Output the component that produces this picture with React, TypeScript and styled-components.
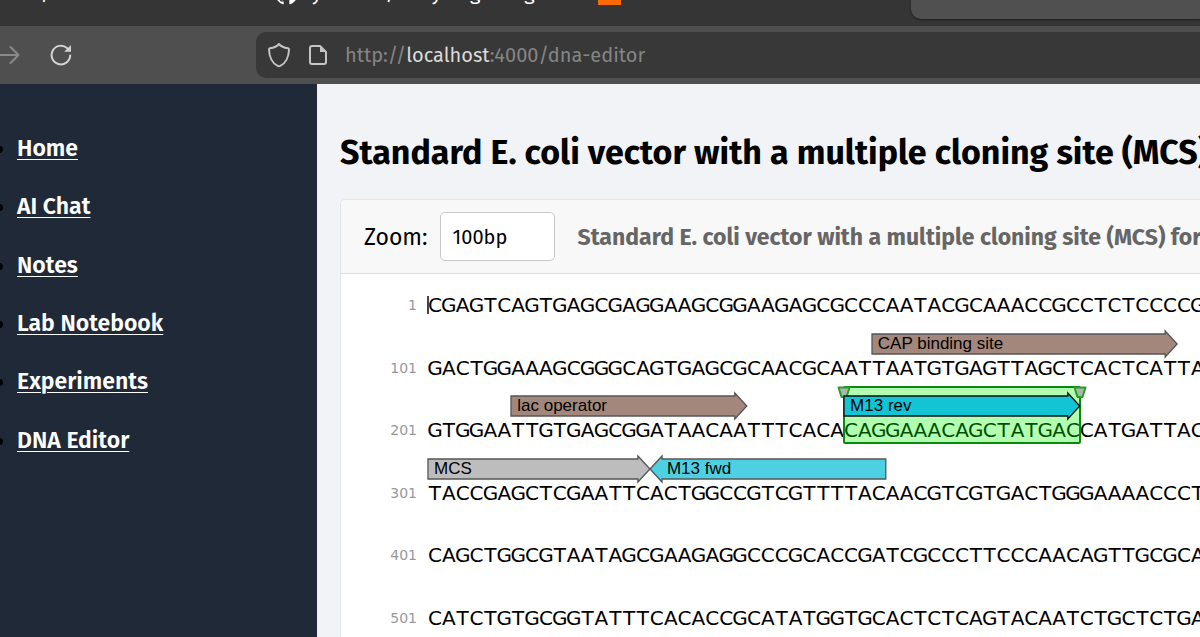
import React from "react";
import styled, { createGlobalStyle } from "styled-components";

const UI_FONT = '"Fira Sans", "Open Sans", "Noto Sans", sans-serif';
const SEQUENCE_FONT = '"DejaVu Sans", "Noto Sans", sans-serif';
const LABEL_FONT = '"Liberation Sans", Arial, sans-serif';

const BASES_PER_ROW = 100;
const ROW_WIDTH = 1387;
const BASE_WIDTH = ROW_WIDTH / BASES_PER_ROW;

const GlobalStyle = createGlobalStyle`
  *, *::before, *::after { box-sizing: border-box; }
  body { margin: 0; font-family: ${UI_FONT}; color: #000; overflow: hidden; }
`;

const Page = styled.div`
  display: flex;
  flex-direction: column;
  height: 100vh;
  overflow: hidden;
`;

/* Browser chrome */

const TabStrip = styled.div`
  display: flex;
  align-items: flex-start;
  flex: none;
  height: 26px;
  overflow: hidden;
  background: #353535;
`;

const Tab = styled.div<{ $width: number }>`
  display: flex;
  align-items: flex-end;
  flex: none;
  width: ${(p) => p.$width}px;
  gap: 3px;
  margin-top: -19px;
  height: 24px;
  color: #fff;
  font-size: 20px;
  line-height: 24px;
  white-space: nowrap;
`;

const OrangeMark = styled.span`
  width: 23px;
  height: 24px;
  background: #ff6a00;
`;

const ActiveTab = styled.div`
  flex: 1;
  height: 19px;
  border-radius: 0 0 0 10px;
  background: #505050;
  box-shadow: 0 1px 2px #1c1c1c;
`;

const Toolbar = styled.div`
  display: flex;
  align-items: center;
  flex: none;
  height: 58px;
  background: #4f4f4f;
`;

const ToolButton = styled.button<{ $width: number; $color: string }>`
  display: flex;
  justify-content: flex-end;
  flex: none;
  width: ${(p) => p.$width}px;
  padding: 0;
  border: 0;
  background: none;
  color: ${(p) => p.$color};
`;

const AddressBar = styled.div`
  display: flex;
  align-items: center;
  flex: 1;
  height: 46px;
  margin-left: 184px;
  padding-left: 11px;
  gap: 17px;
  border-radius: 10px 0 0 10px;
  background: #383838;
  color: #c4c4c4;
`;

const Url = styled.span`
  color: #858585;
  font-size: 20px;
  line-height: 28px;
`;

const Host = styled.span`
  color: #dadada;
`;

/* Application */

const Body = styled.div`
  display: flex;
  flex: 1;
  min-height: 0;
`;

const Sidebar = styled.nav`
  flex: none;
  width: 317px;
  padding-top: 35px;
  background: #202938;
`;

const NavList = styled.ul`
  display: grid;
  grid-auto-rows: 1fr;
  height: 350px;
  margin: 0;
  padding: 0 0 0 17px;
`;

const NavItem = styled.li`
  font-size: 23px;
  line-height: 58px;
`;

const NavLink = styled.a`
  color: #fff;
  font-weight: 600;
  text-decoration: underline;
  text-decoration-thickness: 1px;
  text-underline-offset: 3px;
`;

const Main = styled.main`
  flex: 1;
  min-width: 0;
  overflow: hidden;
  padding: 48px 0 0 23px;
  background: #f2f3f6;
`;

const Title = styled.h1`
  margin: 0 0 27px;
  font-size: 34px;
  line-height: 41px;
  font-weight: 700;
  height: 40px;
  white-space: nowrap;
`;

const Panel = styled.section`
  border: 1px solid #e2e5e9;
  border-right: 0;
  border-radius: 5px 0 0 0;
  height: 100%;
  overflow: hidden;
  background: #fff;
`;

const PanelHeader = styled.header`
  display: flex;
  align-items: center;
  height: 74px;
  padding-left: 23px;
  gap: 23px;
  border-bottom: 1px solid #dcdcdc;
  background: #f8f8f8;
  white-space: nowrap;
`;

const ZoomField = styled.label`
  display: flex;
  align-items: center;
  gap: 12px;
  font-size: 23px;
  line-height: 28px;
`;

const ZoomSelect = styled.select`
  appearance: none;
  width: 115px;
  height: 49px;
  padding: 0 12px;
  border: 1px solid #c8c8c8;
  border-radius: 5px;
  background: #fff;
  color: #000;
  font-family: inherit;
  font-size: 20px;
`;

const SequenceName = styled.strong`
  color: #666;
  font-size: 23px;
  line-height: 28px;
  font-weight: 700;
`;

const Sequence = styled.div`
  display: grid;
  grid-template-rows: 44px repeat(5, 1fr);
  height: 357px;
`;

const SequenceRow = styled.div`
  display: grid;
  grid-template-columns: 76px ${ROW_WIDTH}px;
  column-gap: 11px;
  align-items: end;
`;

const LineNumber = styled.span`
  color: #999;
  font-family: ${SEQUENCE_FONT};
  font-size: 14px;
  line-height: 26px;
  text-align: right;
`;

const Track = styled.div<{ $annotated: boolean }>`
  display: grid;
  grid-template-columns: repeat(${BASES_PER_ROW}, minmax(0, 1fr));
  grid-template-rows: ${(p) => (p.$annotated ? "28px 20px" : "20px")};
  padding-bottom: 3px;
`;

const Base = styled.span<{ $line: number; $column: number }>`
  grid-row: ${(p) => p.$line};
  grid-column: ${(p) => p.$column};
  display: flex;
  justify-content: center;
  font-family: ${SEQUENCE_FONT};
  font-size: 20px;
  line-height: 20px;
`;

const Caret = styled.span`
  grid-row: 1;
  grid-column: 1;
  align-self: center;
  width: 2px;
  height: 18px;
  margin-left: -1px;
  background: #444;
`;

const Feature = styled.div<{ $start: number; $length: number }>`
  z-index: 2;
  display: grid;
  grid-row: 1;
  grid-column: ${(p) => p.$start + 1} / span ${(p) => p.$length};
  align-items: center;

  > * {
    grid-area: 1 / 1;
  }
`;

const FeatureShape = styled.svg`
  display: block;
  overflow: visible;
`;

const FeatureLabel = styled.span<{ $indent: number }>`
  padding-left: ${(p) => p.$indent}px;
  font-family: ${LABEL_FONT};
  font-size: 17px;
  line-height: 28px;
  white-space: nowrap;
`;

const Selection = styled.div<{ $start: number; $length: number }>`
  position: relative;
  z-index: 1;
  grid-row: 1 / 3;
  grid-column: ${(p) => p.$start + 1} / span ${(p) => p.$length};
  margin: -6px -1px -4px;
  border: 2px solid #0a8a0a;
  border-radius: 2px;
  background: rgba(0, 255, 0, 0.3);
`;

const Handle = styled.svg<{ $side: "left" | "right" }>`
  position: absolute;
  top: -2px;
  ${(p) => p.$side}: -8px;
`;

type FeatureData = {
  name: string;
  start: number;
  length: number;
  fill: string;
  stroke: string;
  reverse?: boolean;
};

type RowData = {
  number: number;
  bases: string;
  features: FeatureData[];
  selection?: { start: number; length: number };
};

const ROWS: RowData[] = [
  { number: 1, bases: "CGAGTCAGTGAGCGAGGAAGCGGAAGAGCGCCCAATACGCAAACCGCCTCTCCCCG", features: [] },
  {
    number: 101,
    bases: "GACTGGAAAGCGGGCAGTGAGCGCAACGCAATTAATGTGAGTTAGCTCACTCATTA",
    features: [{ name: "CAP binding site", start: 32, length: 22, fill: "#a3877d", stroke: "#555" }],
  },
  {
    number: 201,
    bases: "GTGGAATTGTGAGCGGATAACAATTTCACACAGGAAACAGCTATGACCATGATTAC",
    features: [
      { name: "lac operator", start: 6, length: 17, fill: "#a3877d", stroke: "#555" },
      { name: "M13 rev", start: 30, length: 17, fill: "#13c4d4", stroke: "#111" },
    ],
    selection: { start: 30, length: 17 },
  },
  {
    number: 301,
    bases: "TACCGAGCTCGAATTCACTGGCCGTCGTTTTACAACGTCGTGACTGGGAAAACCCT",
    features: [
      { name: "MCS", start: 0, length: 16, fill: "#bdbdbd", stroke: "#555" },
      { name: "M13 fwd", start: 16, length: 17, fill: "#4dd0e1", stroke: "#555", reverse: true },
    ],
  },
  { number: 401, bases: "CAGCTGGCGTAATAGCGAAGAGGCCCGCACCGATCGCCCTTCCCAACAGTTGCGCA", features: [] },
  { number: 501, bases: "CATCTGTGCGGTATTTCACACCGCATATGGTGCACTCTCAGTACAATCTGCTCTGA", features: [] },
];

const LINKS = ["Home", "AI Chat", "Notes", "Lab Notebook", "Experiments", "DNA Editor"];
const NAME = "Standard E. coli vector with a multiple cloning site (MCS) for";

function FeatureArrow({ feature }: { feature: FeatureData }) {
  const w = feature.length * BASE_WIDTH;
  const neck = w - 12;
  const d = `M0 4H${neck}V1L${w} 14L${neck} 27V24H0Z`;
  return (
    <Feature $start={feature.start} $length={feature.length}>
      <FeatureShape width="100%" height="28" aria-hidden="true">
        <path
          d={d}
          fill={feature.fill}
          stroke={feature.stroke}
          strokeWidth="1.3"
          transform={feature.reverse ? `translate(${w} 0) scale(-1 1)` : undefined}
        />
      </FeatureShape>
      <FeatureLabel $indent={feature.reverse ? 17 : 6}>{feature.name}</FeatureLabel>
    </Feature>
  );
}

function SelectionHandle({ side }: { side: "left" | "right" }) {
  return (
    <Handle $side={side} width="14" height="13" viewBox="0 0 14 13" aria-hidden="true">
      <path d="M1.5 1.5H12.500L9.500 11H4.500Z" fill="#a9b8a9" stroke="#2c9a2c" strokeWidth="2" strokeLinejoin="round" />
    </Handle>
  );
}

function SequenceLine({ row }: { row: RowData }) {
  const annotated = row.features.length > 0;
  return (
    <SequenceRow>
      <LineNumber>{row.number}</LineNumber>
      <Track $annotated={annotated}>
        {row.bases.split("").map((base, i) => (
          <Base key={i} $line={annotated ? 2 : 1} $column={i + 1}>
            {base}
          </Base>
        ))}
        {row.number === 1 && <Caret />}
        {row.selection && (
          <Selection $start={row.selection.start} $length={row.selection.length}>
            <SelectionHandle side="left" />
            <SelectionHandle side="right" />
          </Selection>
        )}
        {row.features.map((f) => (
          <FeatureArrow key={f.name} feature={f} />
        ))}
      </Track>
    </SequenceRow>
  );
}

export default function App() {
  return (
    <Page>
      <GlobalStyle />
      <TabStrip>
        <Tab $width={275}>data/</Tab>
        <Tab $width={323}>
          <svg width="23" height="24" viewBox="0 0 24 24" fill="#fff" aria-hidden="true">
            <path d="M12 .3a12 12 0 0 0-3.800 23.380c.6.110.820-.260.820-.570v-2.230c-3.340.730-4.040-1.420-4.040-1.420-.550-1.380-1.330-1.750-1.330-1.750-1.090-.740.080-.730.080-.730 1.200.090 1.840 1.240 1.840 1.240 1.070 1.830 2.810 1.300 3.490.990.110-.770.420-1.300.760-1.600-2.660-.300-5.470-1.330-5.470-5.930 0-1.310.470-2.380 1.240-3.220-.140-.300-.540-1.520.100-3.180 0 0 1.010-.320 3.300 1.230a11.500 11.500 0 0 1 6.020 0c2.280-1.550 3.290-1.230 3.290-1.230.640 1.660.240 2.880.120 3.180.770.840 1.230 1.910 1.230 3.220 0 4.610-2.800 5.620-5.480 5.920.420.360.810 1.100.810 2.220v3.290c0 .320.190.690.800.570A12 12 0 0 0 12 .3" />
          </svg>
          Synthetic/body bug fixing
        </Tab>
        <Tab $width={313}>
          <OrangeMark />
        </Tab>
        <ActiveTab />
      </TabStrip>
      <Toolbar>
        <ToolButton type="button" aria-label="Forward" $width={20} $color="#8a8a8a">
          <svg width="20" height="20" viewBox="0 0 20 20" fill="none" stroke="currentColor" strokeWidth="2" strokeLinecap="round" strokeLinejoin="round">
            <path d="M0 10H18.500M10.500 2L18.500 10L10.500 18" />
          </svg>
        </ToolButton>
        <ToolButton type="button" aria-label="Reload" $width={52} $color="#d4d4d4">
          <svg width="22" height="22" viewBox="0 0 22 22" fill="none" stroke="currentColor" strokeWidth="2" strokeLinecap="round">
            <path d="M20.200 11.500A9.300 9.300 0 1 1 17.200 4.200" />
            <path d="M21 1V7.800H14.200Z" fill="currentColor" stroke="none" />
          </svg>
        </ToolButton>
        <AddressBar>
          <svg width="24" height="26" viewBox="0 0 24 26" fill="none" stroke="currentColor" strokeWidth="2" strokeLinejoin="round" aria-hidden="true">
            <path d="M12 2C13.500 3.800 17.500 5.800 21 6.300Q22 6.500 22 7.500C21.800 15 18.500 21.500 13.300 23.900Q12 24.500 10.700 23.900C5.500 21.500 2.200 15 2 7.500Q2 6.500 3 6.300C6.500 5.800 10.500 3.800 12 2Z" />
          </svg>
          <svg width="20" height="22" viewBox="0 0 20 22" fill="none" stroke="currentColor" strokeWidth="2" strokeLinejoin="round" aria-hidden="true">
            <path d="M4 2H12L18 8V18Q18 20 16 20H4Q2 20 2 18V4Q2 2 4 2Z" />
            <path d="M12 2V8H18Z" fill="currentColor" stroke="none" />
          </svg>
          <Url>
            http://<Host>localhost</Host>:4000/dna-editor
          </Url>
        </AddressBar>
      </Toolbar>
      <Body>
        <Sidebar>
          <NavList>
            {LINKS.map((link) => (
              <NavItem key={link}>
                <NavLink href="#">{link}</NavLink>
              </NavItem>
            ))}
          </NavList>
        </Sidebar>
        <Main>
          <Title>{NAME}</Title>
          <Panel>
            <PanelHeader>
              <ZoomField>
                Zoom:
                <ZoomSelect defaultValue="100bp">
                  <option>100bp</option>
                </ZoomSelect>
              </ZoomField>
              <SequenceName>{NAME}</SequenceName>
            </PanelHeader>
            <Sequence>
              {ROWS.map((row) => (
                <SequenceLine key={row.number} row={row} />
              ))}
            </Sequence>
          </Panel>
        </Main>
      </Body>
    </Page>
  );
}
